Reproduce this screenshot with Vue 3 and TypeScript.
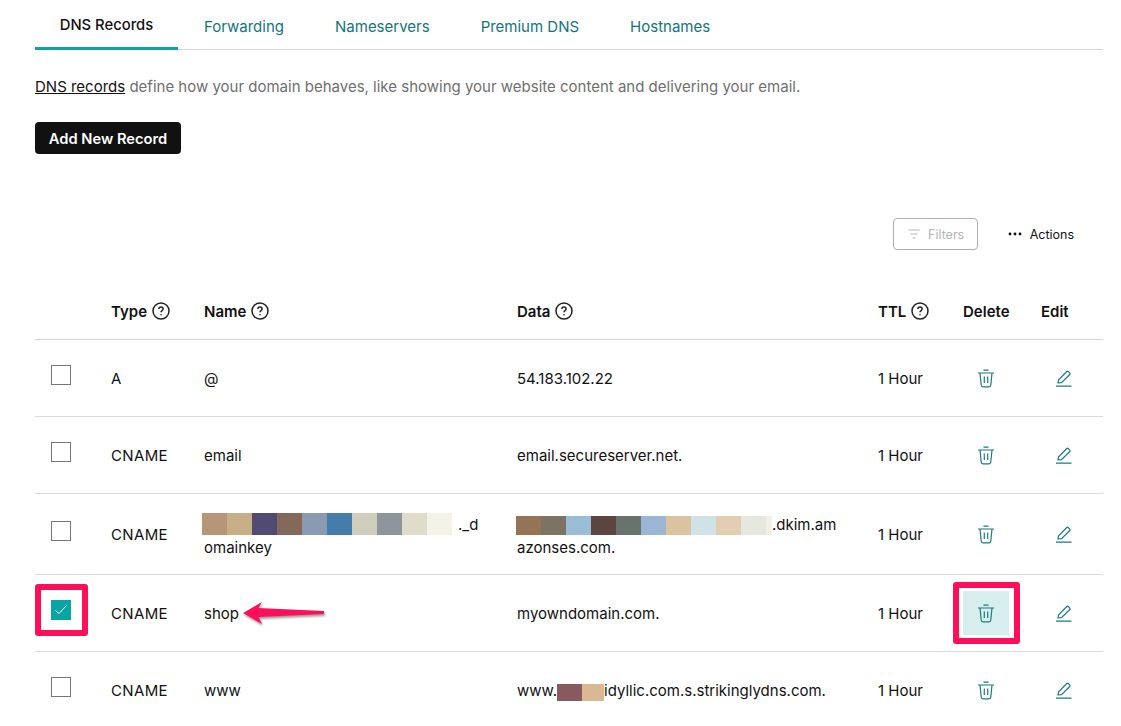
<script setup lang="ts">
interface Part { text?: string; colors?: string[] }
interface Row { type: string; name: Part[][]; data: Part[][]; checked?: boolean; tall?: boolean; mark?: boolean }
const tabs = ['DNS Records', 'Forwarding', 'Nameservers', 'Premium DNS', 'Hostnames']
const nameColors = ['#b59777', '#c6af86', '#514a72', '#84695a', '#8a9ab2', '#447dab', '#cfcdbb', '#8f959d', '#dfddc9', '#f4f3e7', '#fffefa']
const dataColors = ['#957356', '#7c7362', '#9abdd8', '#5c443f', '#67736c', '#9ab6d4', '#dcc3a0', '#cfe3e6', '#e3ceb3', '#e6e7de', '#f3efe6']
const rows: Row[] = [
  { type: 'A', name: [[{ text: '@' }]], data: [[{ text: '54.183.102.22' }]] },
  { type: 'CNAME', name: [[{ text: 'email' }]], data: [[{ text: 'email.secureserver.net.' }]] },
  { type: 'CNAME', tall: true,
    name: [[{ colors: nameColors }, { text: '._d' }], [{ text: 'omainkey' }]],
    data: [[{ colors: dataColors }, { text: '.dkim.am' }], [{ text: 'azonses.com.' }]] },
  { type: 'CNAME', checked: true, mark: true, name: [[{ text: 'shop' }]], data: [[{ text: 'myowndomain.com.' }]] },
  { type: 'CNAME', name: [[{ text: 'www' }]],
    data: [[{ text: 'www.' }, { colors: ['#885a60', '#dab893'] }, { text: 'idyllic.com.s.strikinglydns.com.' }]] },
]
const heads = [
  { label: 'Type', help: true }, { label: 'Name', help: true }, { label: 'Data', help: true },
  { label: 'TTL', help: true }, { label: 'Delete', help: false }, { label: 'Edit', help: false },
]
</script>

<template>
  <main class="page">
    <nav class="tabs">
      <a v-for="(t, i) in tabs" :key="t" class="tab" :class="{ active: i === 0 }">{{ t }}</a>
    </nav>
    <p class="intro"><a class="intro-link">DNS records</a> define how your domain behaves, like showing your website content and delivering your email.</p>
    <button class="add">Add New Record</button>
    <div class="tools">
      <button class="filters">
        <svg width="12" height="10" viewBox="0 0 12 10" fill="none" stroke="#b5b5b5" stroke-width="1"><path d="M0.5 1h11M2.500 5h7M4.500 9h3" /></svg>
        Filters
      </button>
      <button class="actions">
        <svg width="14" height="4" viewBox="0 0 14 4" fill="#111"><circle cx="2" cy="2" r="1.400" /><circle cx="7" cy="2" r="1.400" /><circle cx="12" cy="2" r="1.400" /></svg>
        Actions
      </button>
    </div>
    <section class="table">
      <div class="row head">
        <span></span>
        <span v-for="h in heads" :key="h.label" class="th">
          {{ h.label }}
          <svg v-if="h.help" width="18" height="18" viewBox="0 0 18 18" fill="none" stroke="#222" stroke-width="1.500">
            <circle cx="9" cy="9" r="8" />
            <path d="M6.900 7.100c0-1.200 1-2 2.100-2s2.100.8 2.100 1.900c0 1.600-2.100 1.600-2.100 3.300" />
            <circle cx="9" cy="12.800" r=".8" fill="#222" stroke="none" />
          </svg>
        </span>
      </div>
      <div v-for="r in rows" :key="r.type + r.name[0][0].text" class="row" :class="{ tall: r.tall }">
        <span class="check-cell">
          <span class="box" :class="{ checked: r.checked }">
            <svg v-if="r.checked" width="14" height="10" viewBox="0 0 14 10" fill="none" stroke="#fff" stroke-width="1"><path d="M1.500 5.500l3.500 3 7.500-8" /></svg>
          </span>
          <span v-if="r.mark" class="hl hl-check"></span>
        </span>
        <span class="type-cell">{{ r.type }}</span>
        <span class="name-cell">
          <span v-for="(line, li) in r.name" :key="li" class="line">
            <template v-for="(p, pi) in line" :key="pi">
              <span v-if="p.colors" class="blur"><i v-for="c in p.colors" :key="c" :style="{ background: c }"></i></span>
              <template v-else>{{ p.text }}</template>
            </template>
          </span>
          <svg v-if="r.mark" class="arrow" width="90" height="30" viewBox="0 0 90 30">
            <path d="M1 12 20 1 16.500 7 82 10 82 13 16.500 16 20 23Z" fill="#ff0f5a" />
          </svg>
        </span>
        <span class="data-cell">
          <span v-for="(line, li) in r.data" :key="li" class="line">
            <template v-for="(p, pi) in line" :key="pi">
              <span v-if="p.colors" class="blur"><i v-for="c in p.colors" :key="c" :style="{ background: c }"></i></span>
              <template v-else>{{ p.text }}</template>
            </template>
          </span>
        </span>
        <span>1 Hour</span>
        <span class="icon-cell">
          <span v-if="r.mark" class="trash-bg"></span>
          <svg class="ico" width="18" height="19" viewBox="0 0 18 19" fill="none" stroke="#1b7a80" stroke-width="1.200">
            <path d="M1 4h16M6.500 1.200h5M3 4l1.200 12c.1 1 .8 1.800 1.800 1.800h6c1 0 1.700-.8 1.800-1.800L15 4M7.300 7.500v6.500M10.700 7.500v6.500" />
          </svg>
          <span v-if="r.mark" class="hl hl-trash"></span>
        </span>
        <span class="icon-cell edit">
          <svg width="16" height="17" viewBox="0 0 16 17" fill="none" stroke="#1b7a80" stroke-width="1.200">
            <path d="M2 12.800l.6-3L10.800 1.500c.4-.4 1-.4 1.400 0l1.600 1.600c.4.4.4 1 0 1.400L5.500 12.700ZM0 16.200h15.500" />
          </svg>
        </span>
      </div>
    </section>
  </main>
</template>

<style>
html, body { margin: 0; background: #fff; overflow: hidden; }
</style>

<style scoped>
.page {
  box-sizing: border-box;
  width: 1121px;
  height: 726px;
  overflow: hidden;
  padding: 0 18px 0 35px;
  font-family: Inter, "Liberation Sans", sans-serif;
  font-size: 15px;
  color: #111;
}
.tabs {
  display: flex;
  height: 50px;
  border-bottom: 1px solid #d4d4d4;
  box-sizing: border-box;
}
.tab {
  box-sizing: border-box;
  height: 50px;
  padding: 18px 25.500px 0;
  color: #13747c;
  line-height: 18px;
}
.tab.active {
  width: 143px;
  margin-right: .5px;
  text-align: center;
  padding: 16px 0 0;
  color: #111;
  font-weight: 500;
  font-size: 14.800px;
  border-bottom: 3px solid #09a5a5;
}
.intro {
  margin: 27px 0 0;
  line-height: 20px;
  color: #6f6f6f;
}
.intro-link { color: #111; text-decoration: underline; }
.add {
  display: block;
  margin-top: 25px;
  width: 146px;
  height: 32px;
  border: 0;
  border-radius: 4px;
  background: #111;
  color: #fff;
  font: 600 14.700px Inter, sans-serif;
  padding: 2px 0 0;
}
.tools {
  display: flex;
  justify-content: flex-end;
  align-items: center;
  margin-top: 64px;
  padding-right: 29px;
  gap: 30px;
}
.filters, .actions {
  display: flex;
  align-items: center;
  background: none;
  padding: 0;
  font: 400 12.500px Inter, sans-serif;
}
.filters {
  box-sizing: border-box;
  width: 85px;
  height: 32px;
  padding-left: 2px;
  justify-content: center;
  gap: 8px;
  border: 1px solid #b0b0b0;
  border-radius: 4px;
  color: #b5b5b5;
}
.actions { border: 0; color: #111; gap: 8px; }
.table { margin-top: 40px; }
.row {
  display: grid;
  grid-template-columns: 76px 93px 313px 361px 85px 78px 1fr;
  align-items: center;
  height: 77px;
  border-bottom: 1px solid #d6dbe0;
  box-sizing: border-box;
}
.type-cell { letter-spacing: .35px; }
.row.head { height: 50px; font-weight: 600; border-color: #d4d4d4; }
.row.head .th { padding-bottom: 7px; }
.row.tall { height: 81px; }
.th { display: flex; align-items: center; gap: 5px; }
.check-cell { position: relative; padding-left: 16px; height: 100%; display: flex; align-items: center; }
.box {
  box-sizing: border-box;
  width: 20px;
  height: 20px;
  margin-top: -6px;
  border: 1.500px solid #767676;
  display: flex;
  align-items: center;
  justify-content: center;
}
.box.checked { background: #09a5a5; border-color: #09a5a5; }
.hl {
  position: absolute;
  box-sizing: border-box;
  border: 6px solid #ff0f5a;
  border-radius: 3px;
  pointer-events: none;
}
.hl-check { left: 0; top: 9px; width: 53px; height: 52px; }
.name-cell, .data-cell { position: relative; margin-top: 2px; }
.tall .name-cell, .tall .data-cell { margin-top: 3px; }
.line { display: flex; white-space: pre; line-height: 24px; }
.tall .line { line-height: 23px; }
.line:first-child { align-items: center; }
.name-cell .blur { margin-left: -2px; height: 22px; }
.data-cell .blur { margin-left: -1px; height: 19px; margin-top: 2px; }
.data-cell .line:only-child .blur { margin-left: 0; height: 17px; margin-top: 2px; }
.blur { display: inline-flex; }
.blur i { display: block; width: 25px; height: 100%; flex: none; }
.blur i:nth-child(11) { width: 6px; }
.blur i:nth-child(2):last-child { width: 22px; }
.icon-cell { position: relative; display: flex; align-items: center; height: 100%; padding-left: 14px; }
.ico { position: relative; }
.edit { padding-left: 15px; }
.trash-bg { position: absolute; left: 0; top: 16px; width: 46px; height: 44px; background: #d6eeed; }
.hl-trash { left: -10px; top: 7px; width: 67px; height: 62px; }
.arrow { position: absolute; left: 38px; top: -1px; filter: drop-shadow(1px 2px 1px rgba(0, 0, 0, .4)); }
</style>
